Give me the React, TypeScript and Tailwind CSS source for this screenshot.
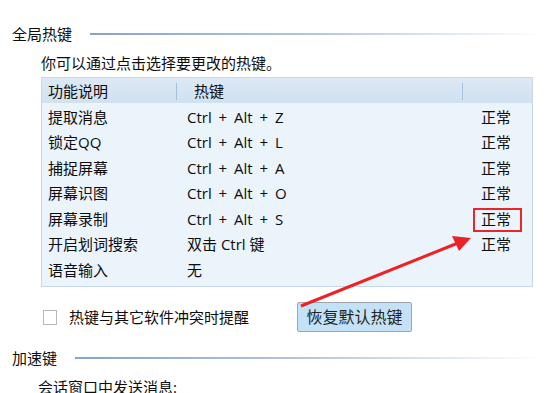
import React from "react";

const rows: [string, string][] = [
  ["提取消息", "Ctrl + Alt + Z"],
  ["锁定QQ", "Ctrl + Alt + L"],
  ["捕捉屏幕", "Ctrl + Alt + A"],
  ["屏幕识图", "Ctrl + Alt + O"],
  ["屏幕录制", "Ctrl + Alt + S"],
  ["开启划词搜索", "双击 Ctrl 键"],
  ["语音输入", "无"],
];
const status = ["正常", "正常", "正常", "正常", "正常", "正常", ""];

function SectionTitle({ title, lineStart }: { title: string; lineStart: string }) {
  return (
    <div className="flex items-center h-[20px]">
      <span className={`shrink-0 ${lineStart}`}>{title}</span>
      <div className="flex-1 h-[2px] bg-gradient-to-r from-[#86a4c6] via-[#b3c8de] to-white" />
    </div>
  );
}

export default function App() {
  return (
    <div
      className="relative w-[550px] h-[393px] overflow-hidden bg-white text-[15px] text-[#0d0d0d] leading-[20px]"
      style={{ fontFamily: '"Open Sans", "Noto Sans CJK SC", sans-serif' }}
    >
      <div className="pl-[12px] pr-[5px] pt-[24px]">
        <SectionTitle title="全局热键" lineStart="w-[78px]" />
      </div>
      <div className="pl-[41px] pr-[17px]">
        <div className="mt-[9px] h-[20px]">你可以通过点击选择要更改的热键。</div>
        <div className="mt-[4px] border border-[#c8d8e8] bg-[#ebf3fb] h-[210px]">
          <div className="flex h-[25px] bg-gradient-to-b from-[#dde9f5] to-[#d0e1f0] items-center">
            <div className="w-[135px] pl-[6px] relative h-full flex items-center">
              功能说明
              <div className="absolute right-0 top-[5px] h-[17px] w-px bg-[#a7c1da]" />
            </div>
            <div className="w-[286px] pl-[17px] relative h-full flex items-center">
              热键
              <div className="absolute right-0 top-[5px] h-[17px] w-px bg-[#a7c1da]" />
            </div>
            <div className="flex-1" />
          </div>
          <div className="pt-[1px]">
            {rows.map(([a, b], i) => (
              <div key={i} className="flex h-[25.5px] items-center">
                <div className="w-[135px] pl-[6px]">{a}</div>
                <div
                  className={
                    b.includes("+")
                      ? "w-[286px] pl-[10px] [word-spacing:3px]"
                      : "w-[286px] pl-[10px]"
                  }
                >
                  {b}
                </div>
                <div className="flex-1 pl-[18px]">{status[i]}</div>
              </div>
            ))}
          </div>
        </div>
      </div>
      <div className="flex items-center mt-[15px] h-[30px]">
        <div className="ml-[43px] w-[14px] h-[15px] border border-[#b9b9b9] bg-white" />
        <span className="ml-[12px] w-[228px]">热键与其它软件冲突时提醒</span>
        <button className="w-[115px] h-[30px] bg-[#c4e2f7] border border-[#9ea7b0] rounded-[2px] text-[16px] text-[#222]">
          恢复默认热键
        </button>
      </div>
      <div className="pl-[12px] pr-[5px] mt-[16px]">
        <SectionTitle title="加速键" lineStart="w-[63px]" />
      </div>
      <div className="pl-[38px] mt-[9px]">会话窗口中发送消息:</div>

      <div className="absolute left-[473px] top-[208px] w-[49px] h-[24px] border-2 border-[#e8262a]" />
      <svg className="absolute left-0 top-0" width="550" height="393" viewBox="0 0 550 393">
        <line x1="301" y1="306" x2="458" y2="243" stroke="#ec2226" strokeWidth="3" />
        <polygon points="471,238 452,236 459,251" fill="#ec2226" />
      </svg>
    </div>
  );
}
